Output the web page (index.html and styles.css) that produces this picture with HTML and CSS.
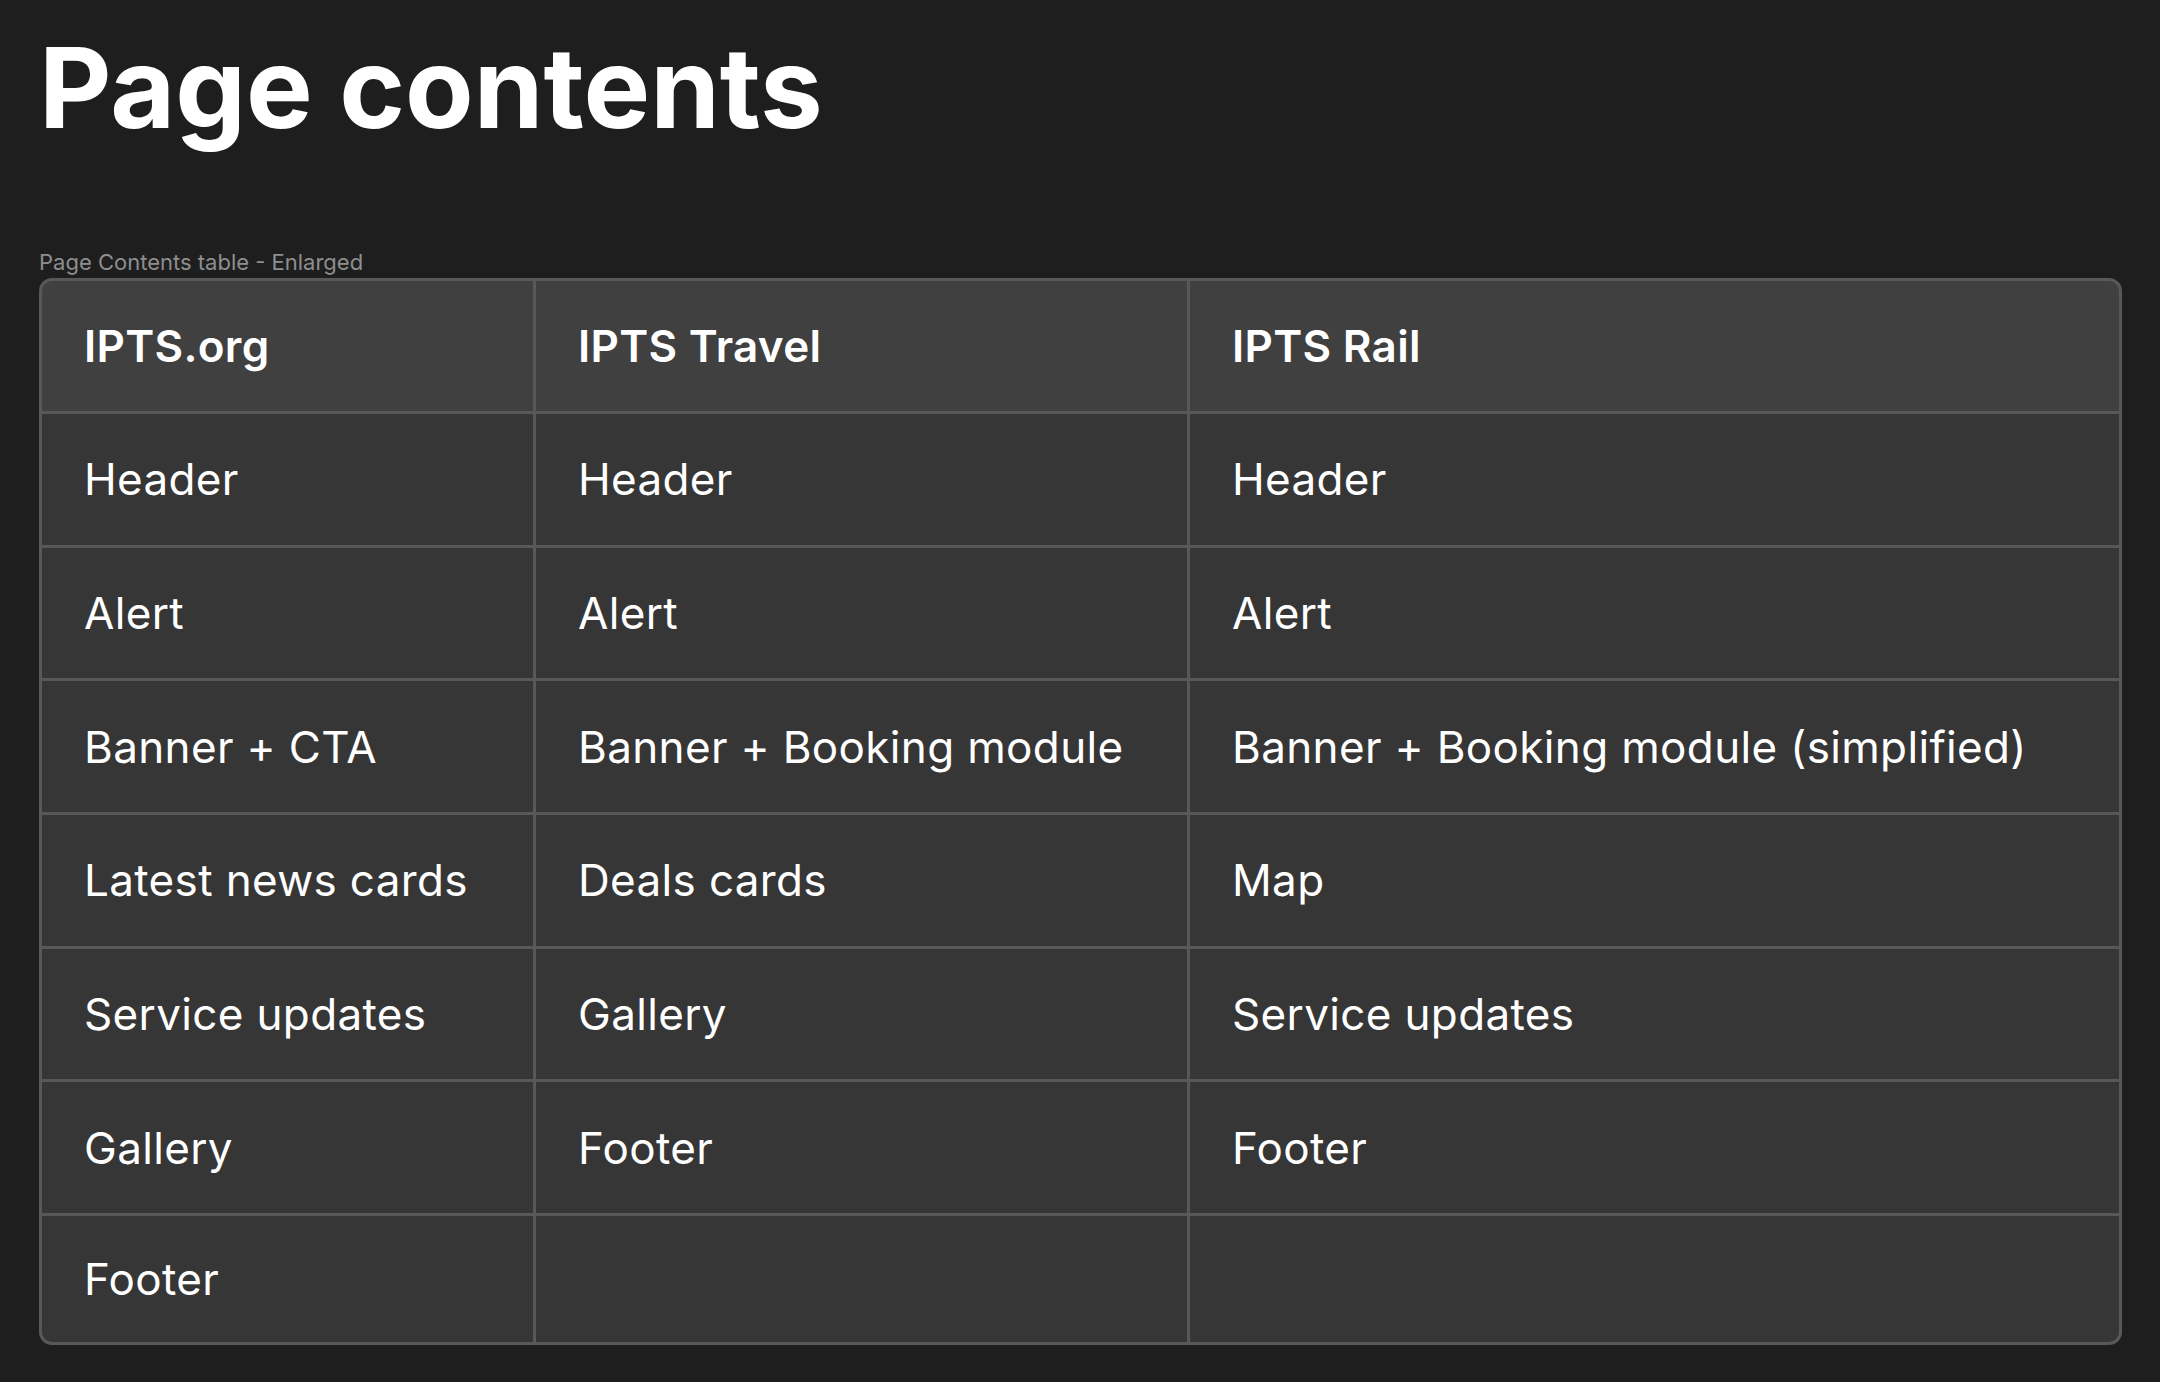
FILE: index.html
```html
<!DOCTYPE html>
<html lang="en">
<head>
<meta charset="utf-8">
<title>Page contents</title>
<link rel="stylesheet" href="styles.css">
</head>
<body>
<main class="page">
  <h1 class="title">Page contents</h1>
  <p class="caption">Page Contents table - Enlarged</p>
  <div class="table">
    <div class="cell head">IPTS.org</div>
    <div class="cell head">IPTS Travel</div>
    <div class="cell head">IPTS Rail</div>

    <div class="cell">Header</div>
    <div class="cell">Header</div>
    <div class="cell">Header</div>

    <div class="cell">Alert</div>
    <div class="cell">Alert</div>
    <div class="cell">Alert</div>

    <div class="cell">Banner + CTA</div>
    <div class="cell">Banner + Booking module</div>
    <div class="cell">Banner + Booking module (simplified)</div>

    <div class="cell">Latest news cards</div>
    <div class="cell">Deals cards</div>
    <div class="cell">Map</div>

    <div class="cell">Service updates</div>
    <div class="cell">Gallery</div>
    <div class="cell">Service updates</div>

    <div class="cell">Gallery</div>
    <div class="cell">Footer</div>
    <div class="cell">Footer</div>

    <div class="cell">Footer</div>
    <div class="cell"></div>
    <div class="cell"></div>
  </div>
</main>
</body>
</html>
```

FILE: styles.css
```css
* { box-sizing: border-box; }
html, body {
  margin: 0;
  padding: 0;
  background: #1e1e1e;
}
body {
  font-family: Inter, "Noto Sans", sans-serif;
  color: #ffffff;
}
.page {
  padding: 31px 38px 0 39px;
}
.title {
  margin: 0;
  font-size: 112px;
  line-height: 1;
  font-weight: 700;
  letter-spacing: 0;
  color: #ffffff;
}
.caption {
  margin: 108px 0 5px 0;
  font-size: 22px;
  line-height: 1;
  color: #8e8e8e;
}
.table {
  display: grid;
  grid-template-columns: 491px 651px 1fr;
  grid-template-rows: 130px repeat(6, 130.7px) 126px;
  gap: 3px;
  background: #585858;
  border: 3px solid #585858;
  border-radius: 13px;
  overflow: hidden;
}
.cell {
  display: flex;
  align-items: center;
  padding: 0 40px 0 42px;
  background: #363636;
  font-size: 44px;
  font-weight: 400;
  letter-spacing: 0.35px;
  color: #ffffff;
  white-space: nowrap;
}
.cell.head {
  background: #404040;
  font-weight: 600;
  letter-spacing: 0.3px;
}
```
